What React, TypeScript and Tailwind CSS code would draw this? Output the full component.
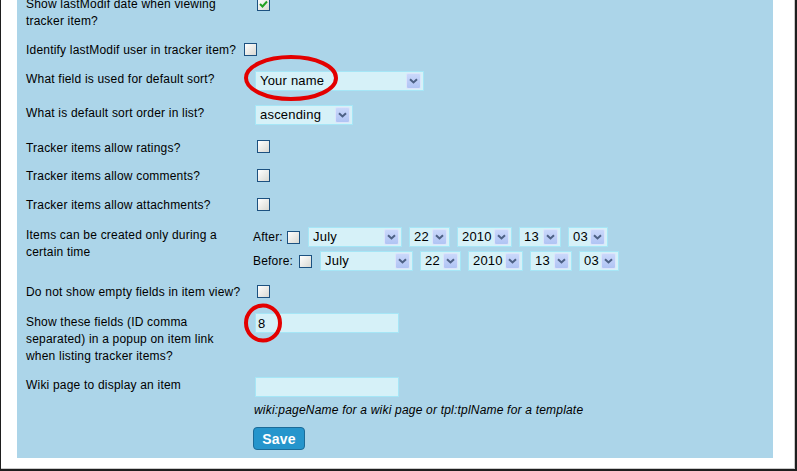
import type { ReactNode } from "react"

const Checkbox = ({ checked = false }: { checked?: boolean }) => (
    <span className="flex h-[13px] w-[13px] shrink-0 items-center justify-center border border-[#1c5180] bg-gradient-to-br from-[#ffffff] to-[#d9d9d3]">
        {checked && (
            <svg width="11" height="11" viewBox="0 0 11 11">
                <path d="M2 5 L4.5 7.5 L9 2.5" fill="none" stroke="#21a121" strokeWidth="2" />
            </svg>
        )}
    </span>
)

const Arrow = () => (
    <span className="mr-[2px] flex h-[16px] w-[15px] shrink-0 items-center justify-center rounded-[2px] border border-[#dce4fb] bg-gradient-to-b from-[#cad8fb] to-[#b0c4f4]">
        <svg width="9" height="6" viewBox="0 0 9 6">
            <path d="M1 1.2 L4.5 4.5 L8 1.2" fill="none" stroke="#4d6185" strokeWidth="2" />
        </svg>
    </span>
)

const Select = ({ value, className }: { value: string; className: string }) => (
    <div className={`flex h-[20px] shrink-0 items-center border border-[#a6e6f6] bg-[#d6f1f8] ${className}`}>
        <span className="flex-1 pl-[4px] text-[13px] leading-[18px] text-black">{value}</span>
        <Arrow />
    </div>
)

const Input = ({ value = "" }: { value?: string }) => (
    <div className="flex h-[20px] w-[144px] items-center border border-[#a6e6f6] bg-[#d6f1f8] pl-[2px] text-[13px] text-black">
        {value}
    </div>
)

type Row = {
    label: ReactNode
    height: string
    control: ReactNode
}

const dateSelects = (
    <>
        <Select value="22" className="w-[41px]" />
        <Select value="2010" className="w-[55px]" />
        <Select value="13" className="w-[42px]" />
        <Select value="03" className="w-[40px]" />
    </>
)

const rows: Row[] = [
    {
        label: <>Show lastModif date when viewing<br />tracker item?</>,
        height: "h-[46px]",
        control: <div className="ml-[4px] mt-[4px]"><Checkbox checked /></div>,
    },
    {
        label: (
            <span className="flex items-start gap-[8px] whitespace-nowrap">
                Identify lastModif user in tracker item?
                <span className="mt-[1px]"><Checkbox /></span>
            </span>
        ),
        height: "h-[29px]",
        control: null,
    },
    {
        label: "What field is used for default sort?",
        height: "h-[34px]",
        control: <div className="ml-[2px] mt-[2px]"><Select value="Your name" className="w-[169px]" /></div>,
    },
    {
        label: "What is default sort order in list?",
        height: "h-[35px]",
        control: <div className="ml-[2px] mt-[2px]"><Select value="ascending" className="w-[98px]" /></div>,
    },
    {
        label: "Tracker items allow ratings?",
        height: "h-[28px]",
        control: <div className="ml-[4px] mt-[2px]"><Checkbox /></div>,
    },
    {
        label: "Tracker items allow comments?",
        height: "h-[29px]",
        control: <div className="ml-[4px] mt-[3px]"><Checkbox /></div>,
    },
    {
        label: "Tracker items allow attachments?",
        height: "h-[30px]",
        control: <div className="ml-[4px] mt-[3px]"><Checkbox /></div>,
    },
    {
        label: <>Items can be created only during a<br />certain time</>,
        height: "h-[57px]",
        control: (
            <div className="mt-[2px] flex flex-col gap-[4px]">
                <div className="flex items-center gap-[7px]">
                    <span className="w-[27px]">After:</span>
                    <span className="mr-[1px]"><Checkbox /></span>
                    <Select value="July" className="w-[94px]" />
                    {dateSelects}
                </div>
                <div className="flex items-center gap-[7px]">
                    <span className="w-[39px]">Before:</span>
                    <span className="mr-[1px]"><Checkbox /></span>
                    <Select value="July" className="w-[93px]" />
                    {dateSelects}
                </div>
            </div>
        ),
    },
    {
        label: "Do not show empty fields in item view?",
        height: "h-[30px]",
        control: <div className="ml-[4px] mt-[3px]"><Checkbox /></div>,
    },
    {
        label: <>Show these fields (ID comma<br />separated) in a popup on item link<br />when listing tracker items?</>,
        height: "h-[63px]",
        control: <div className="ml-[2px] mt-[1px]"><Input value="8" /></div>,
    },
    {
        label: "Wiki page to display an item",
        height: "h-[83px]",
        control: (
            <div className="mt-[2px] flex flex-col items-start">
                <div className="ml-[2px]"><Input /></div>
                <p className="ml-[1px] mt-[5px] italic leading-[17px]">wiki:pageName for a wiki page or tpl:tplName for a template</p>
                <button className="mt-[8px] h-[23px] w-[52px] rounded-[4px] border border-[#1b6b98] bg-[#2595cc] text-[14px] font-bold leading-[20px] text-white">
                    Save
                </button>
            </div>
        ),
    },
]

export default function App() {
    return (
        <div className="relative h-[471px] w-[797px] overflow-hidden border-b-2 border-l border-r-2 border-[#1e1e1e] bg-white font-['Liberation_Sans',Arial,sans-serif] text-[12px] tracking-[0.2px] text-black">
            <div className="h-full border-b border-r border-[#c9c9c9]">
                <div className="ml-[16px] h-[458px] w-[756px] overflow-hidden bg-[#acd5e9]">
                    <div className="-mt-[6px] flex flex-col pl-[9px]">
                        {rows.map((row, index) => (
                            <div key={index} className={`flex items-start leading-[17px] ${row.height}`}>
                                <div className="w-[227px] shrink-0 pt-[2px]">{row.label}</div>
                                <div>{row.control}</div>
                            </div>
                        ))}
                    </div>
                </div>
            </div>
            <svg className="pointer-events-none absolute left-0 top-0" width="797" height="471">
                <ellipse cx="290" cy="78" rx="45" ry="21" fill="none" stroke="#e30000" strokeWidth="4" />
                <ellipse cx="262" cy="323" rx="17" ry="17.5" fill="none" stroke="#e30000" strokeWidth="4" />
            </svg>
        </div>
    )
}
